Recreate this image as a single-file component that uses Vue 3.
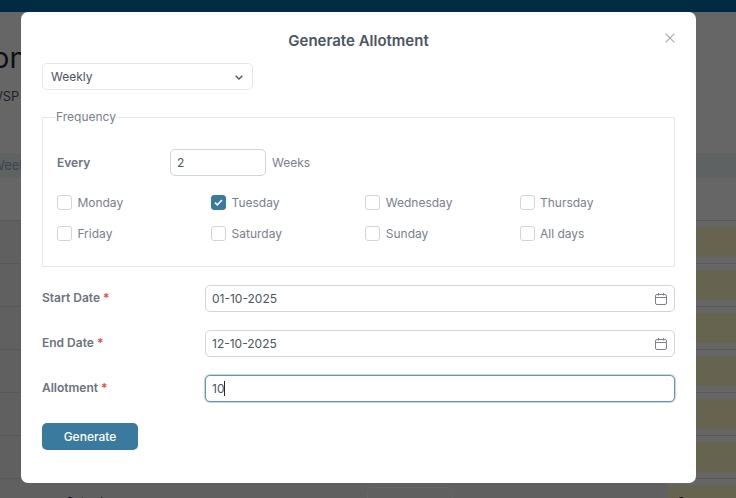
<script setup>
import { ref } from 'vue'

const days = ['Monday', 'Tuesday', 'Wednesday', 'Thursday', 'Friday', 'Saturday', 'Sunday', 'All days']
const selected = ref(['Tuesday'])

const toggle = (day) => {
  selected.value = selected.value.includes(day)
    ? selected.value.filter((d) => d !== day)
    : [...selected.value, day]
}

const startDate = ref('01-10-2025')
const endDate = ref('12-10-2025')
const every = ref('2')
const allotment = ref('10')

const rows = [1, 2, 3, 4, 5, 6]
</script>

<template>
  <div class="page">
    <div class="topbar"></div>
    <h1 class="page-title">one</h1>
    <p class="page-sub">/SP</p>
    <div class="table">
      <div class="head">ys</div>
      <div class="week">Week</div>
      <div class="row" v-for="r in rows" :key="r">
        <div class="cell"><div class="cell-yellow"></div></div>
      </div>
      <div class="row last">
        <span class="last-day">Saturday</span>
        <span class="last-input"></span>
        <div class="cell"><div class="cell-yellow"><span>0</span></div></div>
      </div>
    </div>

    <div class="backdrop">
      <div class="modal">
        <button class="close" aria-label="Close">
          <svg width="10" height="10" viewBox="0 0 10 10" fill="none" stroke="#a3a9b5" stroke-width="1.2">
            <path d="M.6.6l8.8 8.8M9.4.6L.6 9.4" />
          </svg>
        </button>
        <h2 class="title">Generate Allotment</h2>

        <div class="select-wrap">
          <select class="select">
            <option>Weekly</option>
            <option>Daily</option>
            <option>Monthly</option>
          </select>
          <svg class="chevron" width="8" height="5" viewBox="0 0 8 5" fill="none" stroke="#4b5563" stroke-width="1.4">
            <path d="M.7.7L4 4 7.3.7" />
          </svg>
        </div>

        <fieldset class="frequency">
          <legend>Frequency</legend>
          <div class="every">
            <label class="every-label">Every</label>
            <input class="input every-input" v-model="every" />
            <span class="unit">Weeks</span>
          </div>
          <div class="days">
            <label class="day" v-for="day in days" :key="day" @click="toggle(day)">
              <span class="box" :class="{ checked: selected.includes(day) }">
                <svg v-if="selected.includes(day)" width="9" height="7" viewBox="0 0 9 7" fill="none" stroke="#fff" stroke-width="1.6">
                  <path d="M1 3.6l2.3 2.2L8 1" />
                </svg>
              </span>
              {{ day }}
            </label>
          </div>
        </fieldset>

        <div class="field">
          <label>Start Date <em>*</em></label>
          <div class="date-wrap">
            <input class="input full" v-model="startDate" />
            <svg class="cal" width="12" height="12" viewBox="0 0 12 12" fill="none" stroke="#7b8190" stroke-width="1">
              <rect x=".5" y="1.5" width="11" height="10" rx="1.5" />
              <path d="M.5 4.5h11M3.5 0v2.5M8.5 0v2.5" />
            </svg>
          </div>
        </div>
        <div class="field">
          <label>End Date <em>*</em></label>
          <div class="date-wrap">
            <input class="input full" v-model="endDate" />
            <svg class="cal" width="12" height="12" viewBox="0 0 12 12" fill="none" stroke="#7b8190" stroke-width="1">
              <rect x=".5" y="1.5" width="11" height="10" rx="1.5" />
              <path d="M.5 4.5h11M3.5 0v2.5M8.5 0v2.5" />
            </svg>
          </div>
        </div>
        <div class="field">
          <label>Allotment <em>*</em></label>
          <div class="date-wrap">
            <input class="input full focused" v-model="allotment" />
            <span class="caret"></span>
          </div>
        </div>

        <button class="generate">Generate</button>
      </div>
    </div>
  </div>
</template>

<style>
html, body { margin: 0; overflow: hidden; }
</style>

<style scoped>
.page {
  position: relative;
  width: 736px;
  height: 498px;
  overflow: hidden;
  background: #fff;
  font-family: Inter, "Liberation Sans", sans-serif;
  color: #1f2937;
}
.topbar { height: 12px; background: #002b40; position: relative; z-index: 2; }
.page-title {
  margin: 28px 0 0 -8px;
  font-size: 29px;
  line-height: 36px;
  font-weight: 400;
}
.page-sub { margin: 11px 0 0 -2px; font-size: 13px; line-height: 18px; color: #4b5563; }
.table { margin-top: 27px; }
.head { font-size: 11px; line-height: 16px; margin-left: -12px; height: 21px; padding-top: 6px; box-sizing: border-box; }
.week { height: 25px; background: #eef4f8; font-size: 13px; color: #8fb0c6; line-height: 25px; margin-bottom: 42px; text-indent: -8px; }
.row {
  position: relative;
  height: 43px;
  box-sizing: border-box;
  border-top: 1px solid #ddd;
  display: flex;
  justify-content: flex-end;
  background: #f1f1f1;
}
.cell { width: 68px; height: 42px; padding-top: 6px; box-sizing: border-box; background: #fff; }
.cell-yellow { height: 30px; background: #fffbc4; font-size: 13px; }
.cell-yellow span { display: block; padding: 9px 0 0 9px; }
.last-day { position: absolute; left: 66px; top: 15px; font-size: 12px; }
.last-input { position: absolute; left: 367px; top: 8px; width: 84px; height: 26px; border: 1px solid #fff; border-radius: 5px; }

.backdrop {
  position: absolute;
  inset: 0;
  background: rgba(0, 0, 0, .6);
  display: flex;
  padding: 12px 0 0 21px;
  box-sizing: border-box;
}
.modal {
  position: relative;
  width: 675px;
  height: 471px;
  box-sizing: border-box;
  padding: 0 21px;
  background: #fff;
  border-radius: 7px;
  color: #4b5563;
  font-size: 12px;
}
.title {
  margin: 0;
  padding-top: 19px;
  height: 51px;
  box-sizing: border-box;
  text-align: center;
  font-size: 15px;
  line-height: 19px;
  font-weight: 600;
  color: #4b5563;
}
.close {
  position: absolute;
  right: 21px;
  top: 21px;
  padding: 0;
  border: 0;
  background: none;
  width: 10px;
  height: 10px;
  display: flex;
}
.select-wrap { position: relative; width: 211px; height: 27px; }
.select {
  appearance: none;
  width: 100%;
  height: 100%;
  box-sizing: border-box;
  padding: 0 8px;
  border: 1px solid #e5e7eb;
  border-radius: 5px;
  background: #fff;
  font: inherit;
  color: #4b5563;
}
.chevron { position: absolute; right: 10px; top: 12px; pointer-events: none; }
.frequency {
  margin: 20px 0 0;
  padding: 0 14px;
  height: 157px;
  box-sizing: border-box;
  border: 1px solid #e5e7eb;
  min-width: 0;
}
.frequency legend {
  margin-left: -1px;
  padding: 0;
  font-size: 12px;
  line-height: 14px;
  color: #7a808d;
}
.every { display: flex; align-items: center; margin-top: 25px; }
.every-label { width: 113px; font-weight: 600; color: #6b7280; }
.input {
  height: 27px;
  box-sizing: border-box;
  padding: 0 6px;
  border: 1px solid #d1d5db;
  border-radius: 5px;
  background: #fff;
  font: inherit;
  color: #4b5563;
  outline: none;
}
.every-input { width: 96px; }
.unit { margin-left: 6px; color: #7a808d; }
.days {
  display: grid;
  grid-template-columns: repeat(4, 154.2px);
  row-gap: 11px;
  margin-top: 16px;
}
.day { display: flex; align-items: center; gap: 5.4px; height: 20px; color: #7a808d; }
.box {
  width: 15px;
  height: 15px;
  box-sizing: border-box;
  border: 1px solid #d1d5db;
  border-radius: 3px;
  display: flex;
  align-items: center;
  justify-content: center;
}
.box.checked { background: #3a7a9e; border-color: #3a7a9e; }
.field { display: flex; align-items: center; height: 27px; margin-top: 18px; }
.field label { width: 163px; font-weight: 600; color: #6b7280; position: relative; top: -1px; }
.field em { font-style: normal; color: #ef4444; }
.date-wrap { position: relative; flex: 1; }
.full { width: 100%; display: block; }
.focused { border-color: #5f97b6; box-shadow: 0 0 0 1px rgba(58, 122, 158, .3); caret-color: transparent; }
.caret { position: absolute; left: 19px; top: 6px; width: 1px; height: 15px; background: #1f2937; }
.cal { position: absolute; right: 8px; top: 8px; pointer-events: none; }
.generate {
  display: block;
  margin-top: 21px;
  width: 96px;
  height: 27px;
  border: 0;
  border-radius: 5px;
  background: #3a7a9e;
  color: #fff;
  font: inherit;
  font-size: 12px;
  font-weight: 500;
}
</style>
